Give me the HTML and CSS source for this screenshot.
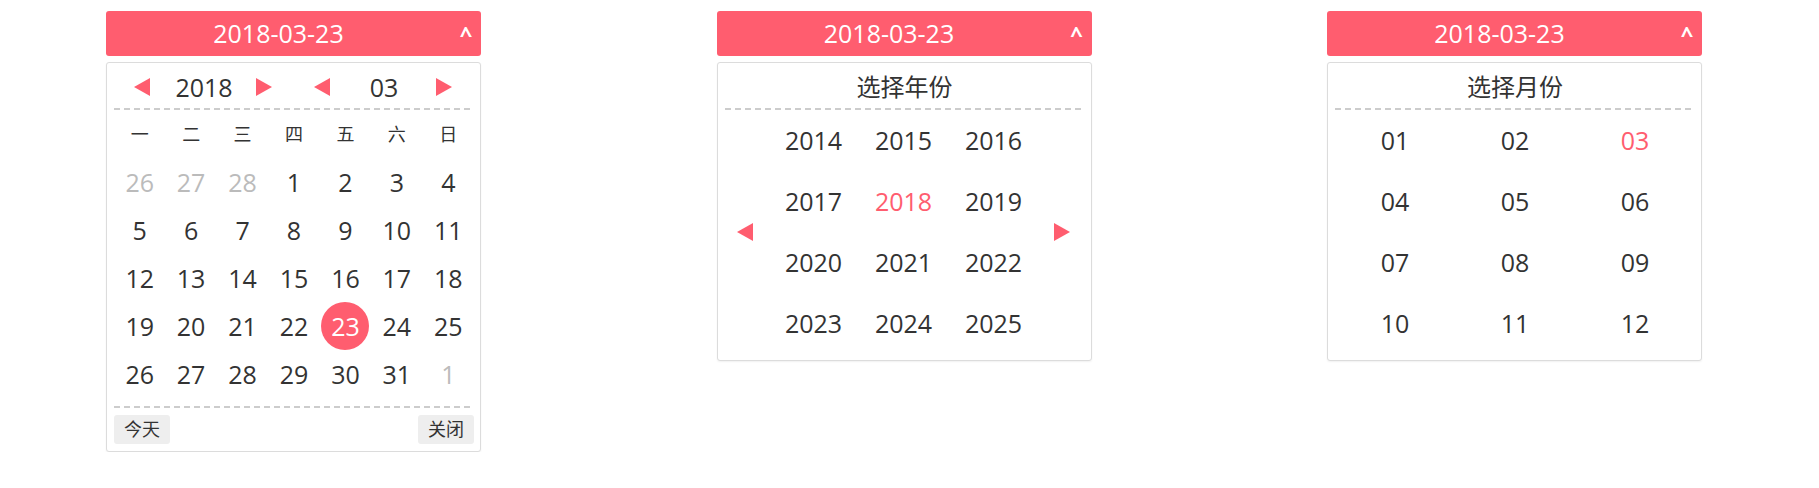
FILE: index.html
```html
<!DOCTYPE html>
<html lang="zh-CN">
<head>
<meta charset="utf-8">
<title>日期选择器</title>
<link rel="stylesheet" href="styles.css">
</head>
<body>
<div class="pickers">
  <div class="picker">
    <div class="head"><span class="val">2018-03-23</span><span class="caret">^</span></div>
    <div class="panel">
      <div class="nav">
        <i class="tri left"></i><span class="nav-val">2018</span><i class="tri right"></i>
        <i class="tri left"></i><span class="nav-val">03</span><i class="tri right"></i>
      </div>
      <div class="rule"></div>
      <div class="week">
        <span>一</span><span>二</span><span>三</span><span>四</span><span>五</span><span>六</span><span>日</span>
      </div>
      <div class="days">
        <span class="off">26</span><span class="off">27</span><span class="off">28</span><span>1</span><span>2</span><span>3</span><span>4</span>
        <span>5</span><span>6</span><span>7</span><span>8</span><span>9</span><span>10</span><span>11</span>
        <span>12</span><span>13</span><span>14</span><span>15</span><span>16</span><span>17</span><span>18</span>
        <span>19</span><span>20</span><span>21</span><span>22</span><span><b class="cur">23</b></span><span>24</span><span>25</span>
        <span>26</span><span>27</span><span>28</span><span>29</span><span>30</span><span>31</span><span class="off">1</span>
      </div>
      <div class="rule gap"></div>
      <div class="foot"><button class="btn">今天</button><button class="btn">关闭</button></div>
    </div>
  </div>

  <div class="picker">
    <div class="head"><span class="val">2018-03-23</span><span class="caret">^</span></div>
    <div class="panel">
      <div class="title">选择年份</div>
      <div class="rule"></div>
      <div class="years">
        <div class="side"><i class="tri left"></i></div>
        <span>2014</span><span>2015</span><span>2016</span>
        <div class="side end"><i class="tri right"></i></div>
        <span>2017</span><span class="sel">2018</span><span>2019</span>
        <span>2020</span><span>2021</span><span>2022</span>
        <span>2023</span><span>2024</span><span>2025</span>
      </div>
    </div>
  </div>

  <div class="picker">
    <div class="head"><span class="val">2018-03-23</span><span class="caret">^</span></div>
    <div class="panel">
      <div class="title">选择月份</div>
      <div class="rule"></div>
      <div class="months">
        <span>01</span><span>02</span><span class="sel">03</span>
        <span>04</span><span>05</span><span>06</span>
        <span>07</span><span>08</span><span>09</span>
        <span>10</span><span>11</span><span>12</span>
      </div>
    </div>
  </div>
</div>
</body>
</html>
```

FILE: styles.css
```css
* { box-sizing: border-box; }

html, body {
  margin: 0;
  background: #fff;
}

body {
  font-family: "Open Sans", "Noto Sans CJK SC", sans-serif;
  color: #333;
}

.pickers {
  display: flex;
  align-items: flex-start;
  gap: 235.5px;
  padding: 11px 0 0 106px;
}

.picker {
  width: 375px;
  flex: none;
}

.head {
  display: flex;
  align-items: center;
  height: 45px;
  background: #ff5d6f;
  border-radius: 3px;
  color: #fff;
}

.val {
  flex: 1;
  text-align: center;
  font-size: 25px;
  line-height: 45px;
}

.caret {
  width: 30px;
  text-align: center;
  font-size: 22px;
  font-weight: 700;
  line-height: 45px;
}

.panel {
  margin-top: 6px;
  border: 1px solid #dcdcdc;
  border-radius: 3px;
  box-shadow: 0 1px 2px rgba(0, 0, 0, 0.06);
  padding: 0 6px 0 7px;
  background: #fff;
}

.nav {
  display: grid;
  grid-template-columns: repeat(6, 60px);
  align-items: center;
  justify-items: center;
  height: 45px;
  padding-top: 3px;
}

.nav-val {
  font-size: 25px;
  line-height: 42px;
}

.tri {
  display: block;
  width: 0;
  height: 0;
  border-top: 9px solid transparent;
  border-bottom: 9px solid transparent;
}

.tri.left {
  border-right: 16px solid #ff5d6f;
  margin-right: 4px;
}

.tri.right {
  border-left: 16px solid #ff5d6f;
}

.rule {
  height: 2px;
  background: repeating-linear-gradient(90deg, #cccccc 0 6px, transparent 6px 10px);
}

.rule.gap {
  margin-top: 8px;
}

.week,
.days {
  display: grid;
  grid-template-columns: repeat(7, 1fr);
  grid-auto-rows: 48px;
  align-items: center;
  justify-items: center;
}

.week span {
  font-size: 18px;
  line-height: 48px;
}

.days span {
  font-size: 25px;
  line-height: 48px;
  width: 100%;
  text-align: center;
}

.days .off {
  color: #bbb;
}

.cur {
  display: block;
  margin: 0 auto;
  width: 48px;
  height: 48px;
  border-radius: 50%;
  background: #ff5d6f;
  color: #fff;
  font-weight: 400;
  line-height: 48px;
}

.foot {
  display: flex;
  justify-content: space-between;
  margin: 7px 0 7px;
}

.btn {
  height: 29px;
  padding: 0 10px;
  border: none;
  border-radius: 3px;
  background: #eee;
  color: #333;
  font-family: "Open Sans", "Noto Sans CJK SC", sans-serif;
  font-size: 18px;
  line-height: 29px;
}

.title {
  height: 45px;
  padding-top: 3px;
  text-align: center;
  font-size: 24px;
  line-height: 42px;
}

.years {
  display: grid;
  grid-template-columns: 44px 90px 90px 90px 46px;
  grid-template-rows: repeat(4, 61px);
  align-items: center;
  justify-items: center;
  margin-bottom: 6px;
}

.years span,
.months span {
  font-size: 25px;
  line-height: 61px;
}

.years .side {
  grid-row: 1 / span 4;
  grid-column: 1;
  display: flex;
  align-items: center;
  justify-content: center;
  height: 100%;
}

.years .side.end {
  grid-column: 5;
}

.years > span:nth-of-type(3n+1) {
  grid-column: 2;
}

.months {
  display: grid;
  grid-template-columns: repeat(3, 120px);
  grid-template-rows: repeat(4, 61px);
  align-items: center;
  justify-items: center;
  margin-bottom: 6px;
}

.sel {
  color: #ff5d6f;
}
```
